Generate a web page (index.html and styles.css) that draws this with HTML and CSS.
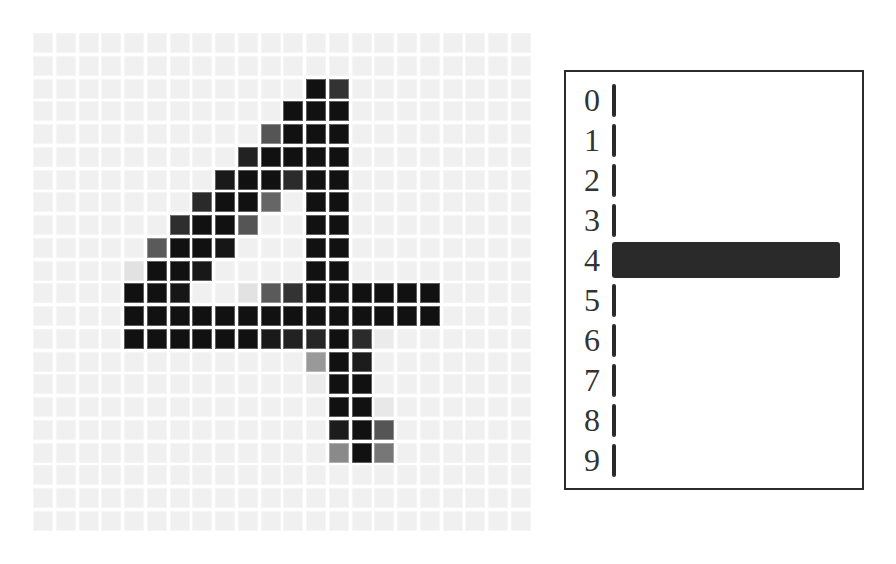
FILE: index.html
```html
<!DOCTYPE html>
<html lang="en">
<head>
<meta charset="utf-8">
<title>Digit classifier</title>
<link rel="stylesheet" href="styles.css">
</head>
<body>
<div class="page">
  <div class="grid">
    <!-- row 0 -->
    <i class="px"></i><i class="px"></i><i class="px"></i><i class="px"></i><i class="px"></i><i class="px"></i><i class="px"></i><i class="px"></i><i class="px"></i><i class="px"></i><i class="px"></i><i class="px"></i><i class="px"></i><i class="px"></i><i class="px"></i><i class="px"></i><i class="px"></i><i class="px"></i><i class="px"></i><i class="px"></i><i class="px"></i><i class="px"></i>
    <!-- row 1 -->
    <i class="px"></i><i class="px"></i><i class="px"></i><i class="px"></i><i class="px"></i><i class="px"></i><i class="px"></i><i class="px"></i><i class="px"></i><i class="px"></i><i class="px"></i><i class="px"></i><i class="px"></i><i class="px"></i><i class="px"></i><i class="px"></i><i class="px"></i><i class="px"></i><i class="px"></i><i class="px"></i><i class="px"></i><i class="px"></i>
    <!-- row 2 -->
    <i class="px"></i><i class="px"></i><i class="px"></i><i class="px"></i><i class="px"></i><i class="px"></i><i class="px"></i><i class="px"></i><i class="px"></i><i class="px"></i><i class="px"></i><i class="px"></i><i class="px on"></i><i class="px" style="background:#333"></i><i class="px"></i><i class="px"></i><i class="px"></i><i class="px"></i><i class="px"></i><i class="px"></i><i class="px"></i><i class="px"></i>
    <!-- row 3 -->
    <i class="px"></i><i class="px"></i><i class="px"></i><i class="px"></i><i class="px"></i><i class="px"></i><i class="px"></i><i class="px"></i><i class="px"></i><i class="px"></i><i class="px"></i><i class="px on"></i><i class="px on"></i><i class="px on"></i><i class="px"></i><i class="px"></i><i class="px"></i><i class="px"></i><i class="px"></i><i class="px"></i><i class="px"></i><i class="px"></i>
    <!-- row 4 -->
    <i class="px"></i><i class="px"></i><i class="px"></i><i class="px"></i><i class="px"></i><i class="px"></i><i class="px"></i><i class="px"></i><i class="px"></i><i class="px"></i><i class="px" style="background:#555"></i><i class="px on"></i><i class="px on"></i><i class="px on"></i><i class="px"></i><i class="px"></i><i class="px"></i><i class="px"></i><i class="px"></i><i class="px"></i><i class="px"></i><i class="px"></i>
    <!-- row 5 -->
    <i class="px"></i><i class="px"></i><i class="px"></i><i class="px"></i><i class="px"></i><i class="px"></i><i class="px"></i><i class="px"></i><i class="px"></i><i class="px" style="background:#222"></i><i class="px on"></i><i class="px on"></i><i class="px on"></i><i class="px on"></i><i class="px"></i><i class="px"></i><i class="px"></i><i class="px"></i><i class="px"></i><i class="px"></i><i class="px"></i><i class="px"></i>
    <!-- row 6 -->
    <i class="px"></i><i class="px"></i><i class="px"></i><i class="px"></i><i class="px"></i><i class="px"></i><i class="px"></i><i class="px"></i><i class="px" style="background:#1a1a1a"></i><i class="px on"></i><i class="px on"></i><i class="px" style="background:#2b2b2b"></i><i class="px on"></i><i class="px on"></i><i class="px"></i><i class="px"></i><i class="px"></i><i class="px"></i><i class="px"></i><i class="px"></i><i class="px"></i><i class="px"></i>
    <!-- row 7 -->
    <i class="px"></i><i class="px"></i><i class="px"></i><i class="px"></i><i class="px"></i><i class="px"></i><i class="px"></i><i class="px" style="background:#2a2a2a"></i><i class="px on"></i><i class="px on"></i><i class="px" style="background:#666"></i><i class="px"></i><i class="px on"></i><i class="px on"></i><i class="px"></i><i class="px"></i><i class="px"></i><i class="px"></i><i class="px"></i><i class="px"></i><i class="px"></i><i class="px"></i>
    <!-- row 8 -->
    <i class="px"></i><i class="px"></i><i class="px"></i><i class="px"></i><i class="px"></i><i class="px"></i><i class="px" style="background:#2e2e2e"></i><i class="px on"></i><i class="px on"></i><i class="px" style="background:#555"></i><i class="px"></i><i class="px"></i><i class="px on"></i><i class="px on"></i><i class="px"></i><i class="px"></i><i class="px"></i><i class="px"></i><i class="px"></i><i class="px"></i><i class="px"></i><i class="px"></i>
    <!-- row 9 -->
    <i class="px"></i><i class="px"></i><i class="px"></i><i class="px"></i><i class="px"></i><i class="px" style="background:#5a5a5a"></i><i class="px on"></i><i class="px on"></i><i class="px" style="background:#161616"></i><i class="px"></i><i class="px"></i><i class="px"></i><i class="px on"></i><i class="px on"></i><i class="px"></i><i class="px"></i><i class="px"></i><i class="px"></i><i class="px"></i><i class="px"></i><i class="px"></i><i class="px"></i>
    <!-- row 10 -->
    <i class="px"></i><i class="px"></i><i class="px"></i><i class="px"></i><i class="px" style="background:#e2e2e2"></i><i class="px on"></i><i class="px on"></i><i class="px" style="background:#181818"></i><i class="px"></i><i class="px"></i><i class="px"></i><i class="px"></i><i class="px on"></i><i class="px on"></i><i class="px"></i><i class="px"></i><i class="px"></i><i class="px"></i><i class="px"></i><i class="px"></i><i class="px"></i><i class="px"></i>
    <!-- row 11 -->
    <i class="px"></i><i class="px"></i><i class="px"></i><i class="px"></i><i class="px on"></i><i class="px on"></i><i class="px" style="background:#161616"></i><i class="px"></i><i class="px"></i><i class="px" style="background:#e2e2e2"></i><i class="px" style="background:#5a5a5a"></i><i class="px" style="background:#333"></i><i class="px on"></i><i class="px on"></i><i class="px on"></i><i class="px on"></i><i class="px on"></i><i class="px on"></i><i class="px"></i><i class="px"></i><i class="px"></i><i class="px"></i>
    <!-- row 12 -->
    <i class="px"></i><i class="px"></i><i class="px"></i><i class="px"></i><i class="px on"></i><i class="px on"></i><i class="px on"></i><i class="px on"></i><i class="px on"></i><i class="px on"></i><i class="px on"></i><i class="px on"></i><i class="px on"></i><i class="px on"></i><i class="px on"></i><i class="px on"></i><i class="px on"></i><i class="px on"></i><i class="px"></i><i class="px"></i><i class="px"></i><i class="px"></i>
    <!-- row 13 -->
    <i class="px"></i><i class="px"></i><i class="px"></i><i class="px"></i><i class="px on"></i><i class="px on"></i><i class="px on"></i><i class="px on"></i><i class="px on"></i><i class="px on"></i><i class="px" style="background:#1a1a1a"></i><i class="px" style="background:#222"></i><i class="px" style="background:#262626"></i><i class="px on"></i><i class="px" style="background:#2b2b2b"></i><i class="px" style="background:#ebebeb"></i><i class="px"></i><i class="px"></i><i class="px"></i><i class="px"></i><i class="px"></i><i class="px"></i>
    <!-- row 14 -->
    <i class="px"></i><i class="px"></i><i class="px"></i><i class="px"></i><i class="px"></i><i class="px"></i><i class="px"></i><i class="px"></i><i class="px"></i><i class="px"></i><i class="px"></i><i class="px"></i><i class="px" style="background:#999"></i><i class="px on"></i><i class="px" style="background:#1c1c1c"></i><i class="px"></i><i class="px"></i><i class="px"></i><i class="px"></i><i class="px"></i><i class="px"></i><i class="px"></i>
    <!-- row 15 -->
    <i class="px"></i><i class="px"></i><i class="px"></i><i class="px"></i><i class="px"></i><i class="px"></i><i class="px"></i><i class="px"></i><i class="px"></i><i class="px"></i><i class="px"></i><i class="px"></i><i class="px" style="background:#ebebeb"></i><i class="px on"></i><i class="px on"></i><i class="px"></i><i class="px"></i><i class="px"></i><i class="px"></i><i class="px"></i><i class="px"></i><i class="px"></i>
    <!-- row 16 -->
    <i class="px"></i><i class="px"></i><i class="px"></i><i class="px"></i><i class="px"></i><i class="px"></i><i class="px"></i><i class="px"></i><i class="px"></i><i class="px"></i><i class="px"></i><i class="px"></i><i class="px"></i><i class="px on"></i><i class="px on"></i><i class="px" style="background:#e8e8e8"></i><i class="px"></i><i class="px"></i><i class="px"></i><i class="px"></i><i class="px"></i><i class="px"></i>
    <!-- row 17 -->
    <i class="px"></i><i class="px"></i><i class="px"></i><i class="px"></i><i class="px"></i><i class="px"></i><i class="px"></i><i class="px"></i><i class="px"></i><i class="px"></i><i class="px"></i><i class="px"></i><i class="px"></i><i class="px" style="background:#1c1c1c"></i><i class="px on"></i><i class="px" style="background:#555"></i><i class="px"></i><i class="px"></i><i class="px"></i><i class="px"></i><i class="px"></i><i class="px"></i>
    <!-- row 18 -->
    <i class="px"></i><i class="px"></i><i class="px"></i><i class="px"></i><i class="px"></i><i class="px"></i><i class="px"></i><i class="px"></i><i class="px"></i><i class="px"></i><i class="px"></i><i class="px"></i><i class="px"></i><i class="px" style="background:#8a8a8a"></i><i class="px on"></i><i class="px" style="background:#777"></i><i class="px"></i><i class="px"></i><i class="px"></i><i class="px"></i><i class="px"></i><i class="px"></i>
    <!-- row 19 -->
    <i class="px"></i><i class="px"></i><i class="px"></i><i class="px"></i><i class="px"></i><i class="px"></i><i class="px"></i><i class="px"></i><i class="px"></i><i class="px"></i><i class="px"></i><i class="px"></i><i class="px"></i><i class="px"></i><i class="px"></i><i class="px"></i><i class="px"></i><i class="px"></i><i class="px"></i><i class="px"></i><i class="px"></i><i class="px"></i>
    <!-- row 20 -->
    <i class="px"></i><i class="px"></i><i class="px"></i><i class="px"></i><i class="px"></i><i class="px"></i><i class="px"></i><i class="px"></i><i class="px"></i><i class="px"></i><i class="px"></i><i class="px"></i><i class="px"></i><i class="px"></i><i class="px"></i><i class="px"></i><i class="px"></i><i class="px"></i><i class="px"></i><i class="px"></i><i class="px"></i><i class="px"></i>
    <!-- row 21 -->
    <i class="px"></i><i class="px"></i><i class="px"></i><i class="px"></i><i class="px"></i><i class="px"></i><i class="px"></i><i class="px"></i><i class="px"></i><i class="px"></i><i class="px"></i><i class="px"></i><i class="px"></i><i class="px"></i><i class="px"></i><i class="px"></i><i class="px"></i><i class="px"></i><i class="px"></i><i class="px"></i><i class="px"></i><i class="px"></i>
  </div>

  <div class="panel">
    <div class="row"><span class="label">0</span><div class="track"><div class="bar bar-min"></div></div></div>
    <div class="row"><span class="label">1</span><div class="track"><div class="bar bar-min"></div></div></div>
    <div class="row"><span class="label">2</span><div class="track"><div class="bar bar-min"></div></div></div>
    <div class="row"><span class="label">3</span><div class="track"><div class="bar bar-min"></div></div></div>
    <div class="row"><span class="label">4</span><div class="track"><div class="bar" style="width:100%"></div></div></div>
    <div class="row"><span class="label">5</span><div class="track"><div class="bar bar-min"></div></div></div>
    <div class="row"><span class="label">6</span><div class="track"><div class="bar bar-min"></div></div></div>
    <div class="row"><span class="label">7</span><div class="track"><div class="bar bar-min"></div></div></div>
    <div class="row"><span class="label">8</span><div class="track"><div class="bar bar-min"></div></div></div>
    <div class="row"><span class="label">9</span><div class="track"><div class="bar bar-min"></div></div></div>
  </div>
</div>
</body>
</html>
```

FILE: styles.css
```css
html, body {
  margin: 0;
  padding: 0;
  background: #ffffff;
}

.page {
  display: flex;
  align-items: flex-start;
  gap: 33px;
  padding: 33px 0 0 33px;
}

.grid {
  display: grid;
  grid-template-columns: repeat(22, 20px);
  grid-auto-rows: 20px;
  gap: 2.76px;
  width: 498px;
  flex: none;
}

.px {
  display: block;
  box-sizing: border-box;
  background: #f0f0f0;
  border: 1px solid rgba(255, 255, 255, 0.32);
}

.px.on {
  background: #111111;
}

.panel {
  box-sizing: border-box;
  width: 300px;
  margin-top: 37px;
  padding: 8px 22px 8px 18px;
  border: 2px solid #2b2b2b;
  flex: none;
}

.row {
  display: flex;
  align-items: center;
  height: 40px;
}

.label {
  width: 16px;
  margin-right: 12px;
  font-family: "Liberation Serif", "Times New Roman", serif;
  font-size: 32px;
  line-height: 40px;
  color: #333333;
  text-align: center;
}

.track {
  flex: 1;
  display: flex;
  align-items: center;
  height: 40px;
}

.bar {
  height: 36px;
  background: #2a2a2a;
  border-radius: 3px;
}

.bar-min {
  width: 4px;
  height: 33px;
  border-radius: 2px;
}
```
